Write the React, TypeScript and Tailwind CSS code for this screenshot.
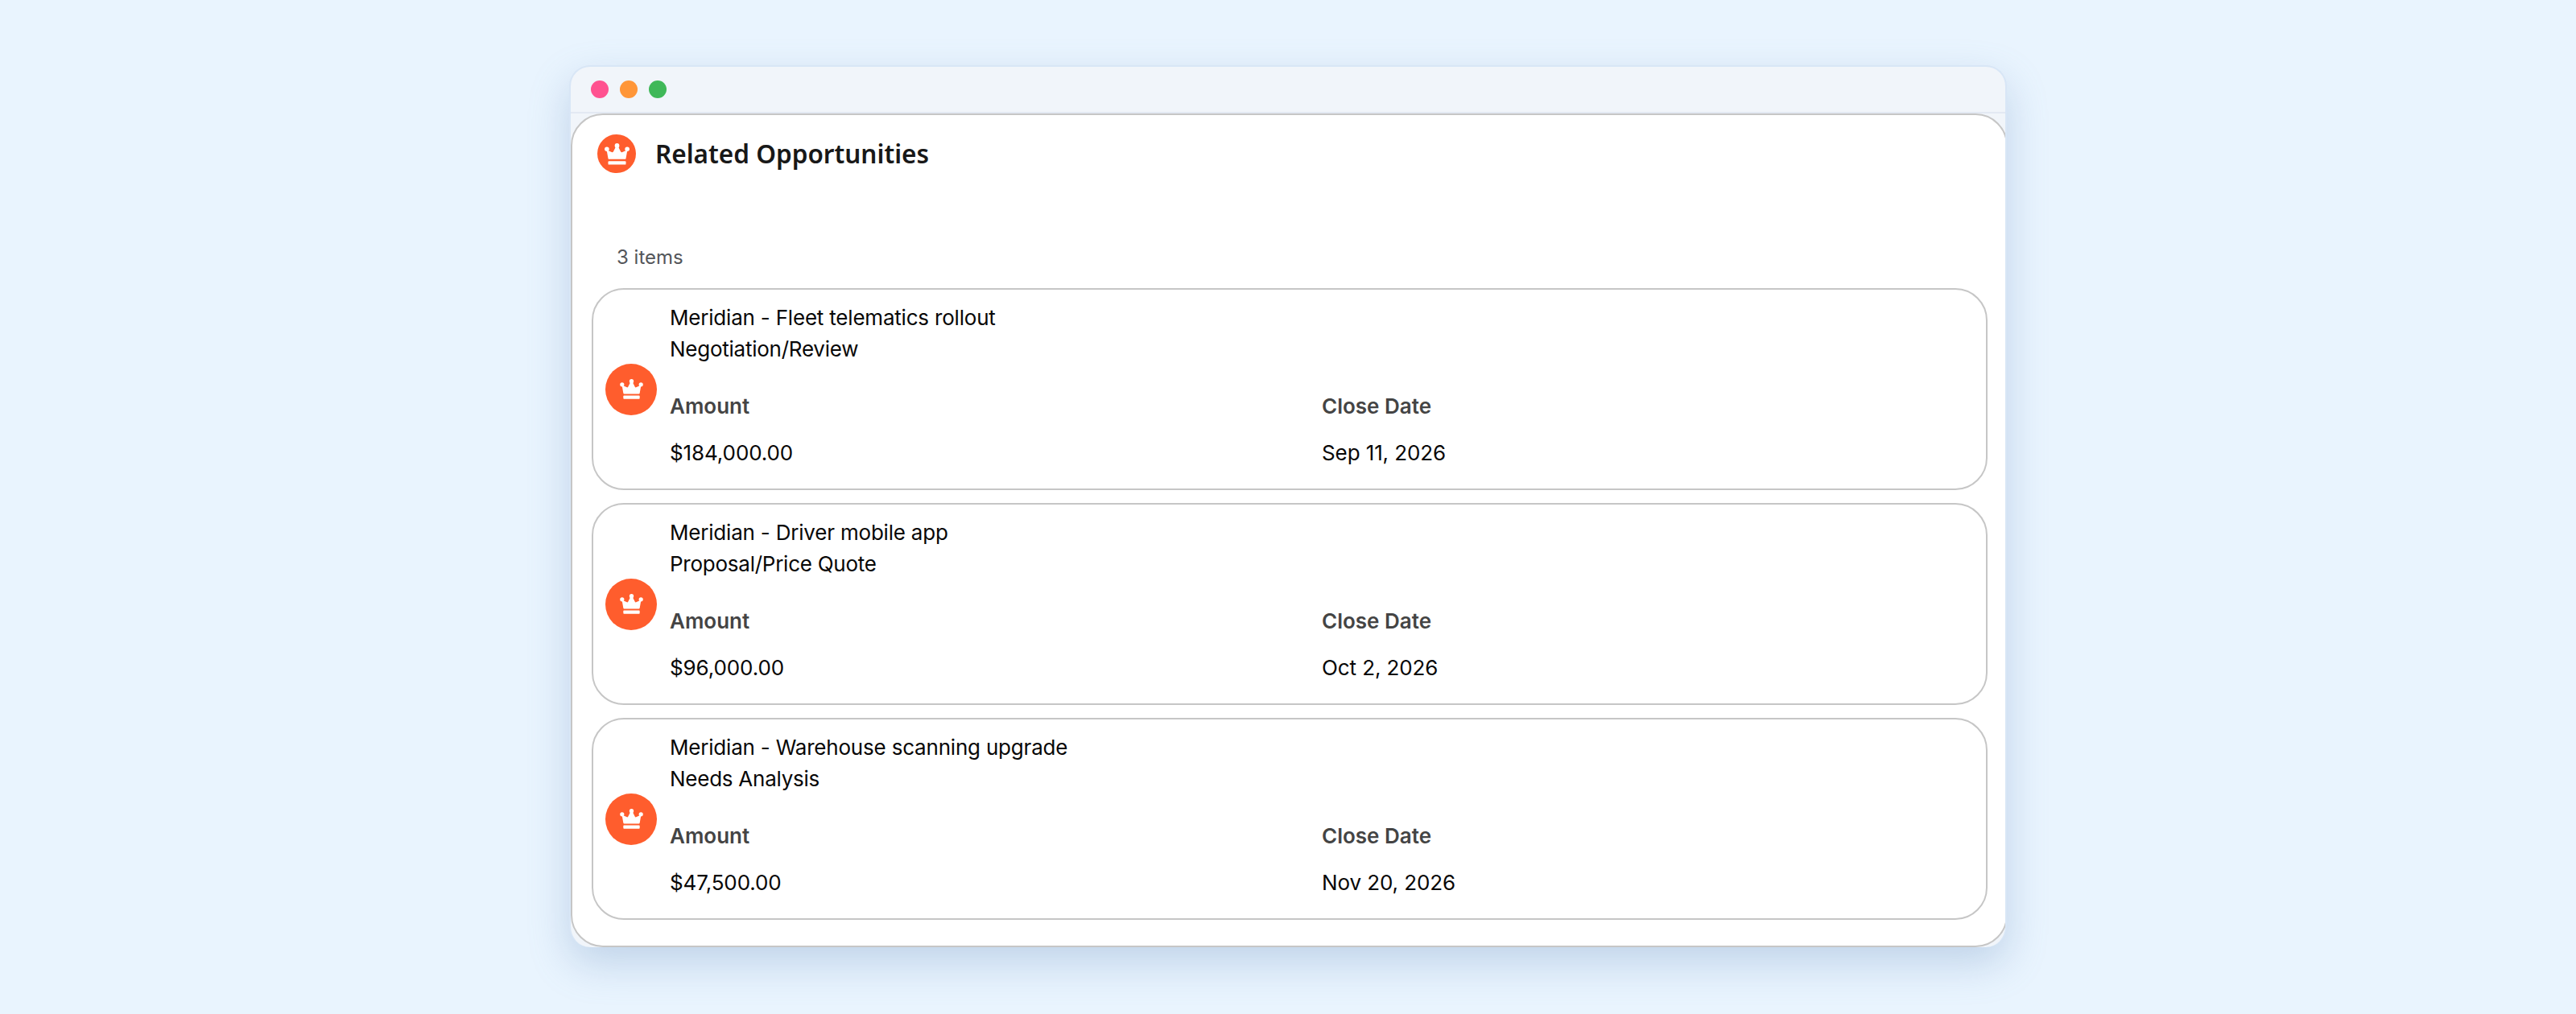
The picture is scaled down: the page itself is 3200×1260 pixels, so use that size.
const opportunities = [
  { name: "Meridian - Fleet telematics rollout", stage: "Negotiation/Review", amount: "$184,000.00", close: "Sep 11, 2026" },
  { name: "Meridian - Driver mobile app", stage: "Proposal/Price Quote", amount: "$96,000.00", close: "Oct 2, 2026" },
  { name: "Meridian - Warehouse scanning upgrade", stage: "Needs Analysis", amount: "$47,500.00", close: "Nov 20, 2026" },
];

function Crown({ className }: { className: string }) {
  return (
    <svg viewBox="0 0 32 28" fill="#fff" className={className}>
      <circle cx="16" cy="3" r="3" />
      <circle cx="2.9" cy="7.6" r="2.9" />
      <circle cx="29.1" cy="7.6" r="2.9" />
      <path d="M2.6 8.5 L9.6 11.6 Q10.6 12 11.2 11 L15 3.4 L17 3.4 L20.8 11 Q21.4 12 22.4 11.6 L29.4 8.5 L27.4 19.6 Q27.2 20.6 26.2 20.6 L5.8 20.6 Q4.8 20.6 4.6 19.6 Z" />
      <rect x="4.6" y="23" width="22.8" height="4.6" rx="1" />
    </svg>
  );
}

function OpportunityCard({ name, stage, amount, close }: (typeof opportunities)[number]) {
  return (
    <div className="flex h-[251px] items-center rounded-[40px] border-2 border-[#c6c6c6] pl-[15px]">
      <div className="flex h-16 w-16 shrink-0 items-center justify-center rounded-full bg-[#ff5d2d]">
        <Crown className="h-[25px] w-[29px]" />
      </div>
      <div className="ml-4 flex-1 pb-[10px] text-[26px] leading-[39px] text-[#080707]">
        <div className="tracking-[-0.2px]">{name}</div>
        <div className="tracking-[-0.25px]">{stage}</div>
        <div className="mt-[32px] grid grid-cols-[810px_1fr] font-semibold text-[#444444]">
          <div>Amount</div>
          <div>Close Date</div>
        </div>
        <div className="mt-[19px] grid grid-cols-[810px_1fr] tracking-[-0.1px]">
          <div>{amount}</div>
          <div>{close}</div>
        </div>
      </div>
    </div>
  );
}

export default function App() {
  return (
    <div className="flex h-[1260px] w-[3200px] items-start justify-center bg-[#e9f4fe] pt-[81px] font-['Inter',sans-serif]">
      <div className="w-[1786px] overflow-hidden rounded-[26px] border-2 border-b-0 border-[#d8e6f6] bg-[#f1f5fa] shadow-[0_20px_50px_rgba(110,145,190,0.33)]">
        <div className="flex h-[58px] items-center gap-[14px] border-b-2 border-[#e3e9f3] pl-[25px]">
          <span className="h-[22px] w-[22px] rounded-full bg-[#ff5290]" />
          <span className="h-[22px] w-[22px] rounded-full bg-[#ff9638]" />
          <span className="h-[22px] w-[22px] rounded-full bg-[#3fb858]" />
        </div>
        <div className="-mr-[3px] h-[1036px] rounded-[40px] border-2 border-[#c6c6c6] bg-white">
          <div className="flex items-center pl-[31px] pt-[24px]">
            <div className="flex h-12 w-12 items-center justify-center rounded-full bg-[#ff5d2d]">
              <Crown className="h-[27px] w-[31px]" />
            </div>
            <h1 className="ml-6 font-['Noto_Sans',sans-serif] text-[31.5px] font-semibold leading-[48px] text-[#181818]">
              Related Opportunities
            </h1>
          </div>
          <div className="pl-[55px] pt-[87px] text-[24px] leading-[36px] text-[#54565a]">3 items</div>
          <div className="mr-[23px] ml-[24px] mt-[20px] flex flex-col gap-[16px]">
            {opportunities.map((o) => (
              <OpportunityCard key={o.name} {...o} />
            ))}
          </div>
        </div>
      </div>
    </div>
  );
}
